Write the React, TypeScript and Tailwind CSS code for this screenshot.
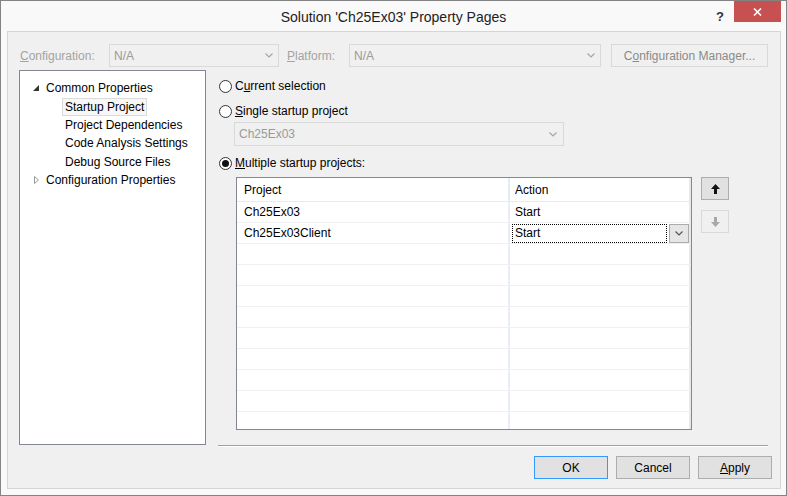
import React from 'react';

const FONT = { fontFamily: '"Liberation Sans", Arial, sans-serif' };

function Chevron({ color = '#a6a6a6' }: { color?: string }) {
  return (
    <svg width="8" height="5" viewBox="0 0 8 5">
      <path d="M0.5 0.5 L4 4 L7.5 0.5" fill="none" stroke={color} strokeWidth="1.2" />
    </svg>
  );
}

function Radio({ checked }: { checked?: boolean }) {
  return (
    <span className="w-[13px] h-[13px] rounded-full border border-[#333] bg-white flex items-center justify-center shrink-0">
      {checked && <span className="w-[7px] h-[7px] rounded-full bg-[#111]" />}
    </span>
  );
}

function Arrow({ up, color }: { up?: boolean; color: string }) {
  return (
    <svg width="9" height="10" viewBox="0 0 9 10" style={{ transform: up ? undefined : 'rotate(180deg)' }}>
      <path d="M4.5 0 L9 5 L6 5 L6 10 L3 10 L3 5 L0 5 Z" fill={color} />
    </svg>
  );
}

const ROWS = [
  { project: 'Ch25Ex03', action: 'Start' },
  { project: 'Ch25Ex03Client', action: 'Start', editing: true },
  ...Array.from({ length: 9 }, () => ({ project: '', action: '' })),
];

const TREE = [
  { label: 'Common Properties', level: 0, icon: 'open' },
  { label: 'Startup Project', level: 1, selected: true },
  { label: 'Project Dependencies', level: 1 },
  { label: 'Code Analysis Settings', level: 1 },
  { label: 'Debug Source Files', level: 1 },
  { label: 'Configuration Properties', level: 0, icon: 'closed' },
];

export default function App() {
  return (
    <div style={FONT} className="w-[787px] h-[496px] border border-[#838383] bg-[#f9f9f9] flex flex-col text-[12px] text-black overflow-hidden">
      {/* title bar */}
      <div className="h-[30px] relative flex justify-end items-start shrink-0">
        <div className="absolute inset-x-0 top-[6px] text-center text-[14px] text-[#222]">
          Solution 'Ch25Ex03' Property Pages
        </div>
        <div className="relative mt-[6px] mr-[10px] text-[13px] font-bold text-[#333]">?</div>
        <div className="relative w-[47px] h-[21px] bg-[#c75050] mr-[5px] flex items-center justify-center">
          <svg width="9" height="8" viewBox="0 0 9 8">
            <path d="M1 0.5 L8 7.5 M8 0.5 L1 7.5" stroke="#fff" strokeWidth="1.6" />
          </svg>
        </div>
      </div>

      {/* client */}
      <div className="ml-[6px] mr-[5px] h-[458px] border border-[#d5d5d5] bg-[#f0f0f0] flex flex-col">
        {/* configuration row */}
        <div className="flex items-center pt-[12px] pl-[12px] text-[#a3a3a3]">
          <span className="w-[89px]"><u>C</u>onfiguration:</span>
          <div className="w-[170px] h-[23px] border border-[#d9d9d9] flex items-center justify-between pl-[4px] pr-[5px] text-[#9a9a9a]">
            <span>N/A</span>
            <Chevron />
          </div>
          <span className="ml-[8px] w-[62px]"><u>P</u>latform:</span>
          <div className="w-[252px] h-[23px] border border-[#d9d9d9] flex items-center justify-between pl-[4px] pr-[5px] text-[#9a9a9a]">
            <span>N/A</span>
            <Chevron />
          </div>
          <div className="ml-[10px] w-[157px] h-[23px] border border-[#d9d9d9] flex items-center justify-center text-[#8a8a8a]">
            C<u>o</u>nfiguration Manager...
          </div>
        </div>

        {/* main */}
        <div className="flex mt-[3px]">
          <div className="ml-[11px] w-[187px] h-[375px] border border-[#828790] bg-white pt-[8px] shrink-0">
            {TREE.map((t) => (
              <div key={t.label} className="h-[18.4px] flex items-center">
                {t.level === 0 ? (
                  <>
                    <span className="w-[26px] flex justify-end pr-[7px]">
                      {t.icon === 'open' ? (
                        <svg width="6" height="6" viewBox="0 0 6 6">
                          <path d="M6 0 L6 6 L0 6 Z" fill="#333" />
                        </svg>
                      ) : (
                        <svg width="5" height="8" viewBox="0 0 5 8">
                          <path d="M0.5 0.5 L4.5 4 L0.5 7.5 Z" fill="none" stroke="#9a9a9a" />
                        </svg>
                      )}
                    </span>
                    <span>{t.label}</span>
                  </>
                ) : (
                  <span
                    className={
                      'ml-[42px] px-[2px] h-[18px] flex items-center border ' +
                      (t.selected ? 'border-[#dadada] bg-[#f7f7f7]' : 'border-transparent')
                    }
                  >
                    {t.label}
                  </span>
                )}
              </div>
            ))}
          </div>

          <div className="ml-[12px] w-[550px] flex flex-col">
            <div className="mt-[8px] h-[16px] flex items-center gap-[3px] pl-[1px]">
              <Radio />
              <span>C<u>u</u>rrent selection</span>
            </div>
            <div className="mt-[9px] h-[16px] flex items-center gap-[3px] pl-[1px]">
              <Radio />
              <span><u>S</u>ingle startup project</span>
            </div>
            <div className="mt-[3px] ml-[16px] w-[330px] h-[24px] border border-[#d9d9d9] flex items-center justify-between pl-[4px] pr-[6px] text-[#9a9a9a]">
              <span>Ch25Ex03</span>
              <Chevron />
            </div>
            <div className="mt-[9px] h-[16px] flex items-center gap-[3px] pl-[1px]">
              <Radio checked />
              <span><u>M</u>ultiple startup projects:</span>
            </div>

            <div className="mt-[6px] flex items-start">
              <div className="ml-[18px] w-[456px] h-[253px] border border-[#828790] bg-white flex flex-col overflow-hidden">
                <div className="h-[24px] flex border-b border-[#e5ebf3] shrink-0">
                  <div className="w-[271px] pl-[7px] flex items-center">Project</div>
                  <div className="w-[2px] bg-[#e5ebf3]" />
                  <div className="flex-1 pl-[5px] flex items-center">Action</div>
                  <div className="w-[2px] bg-[#e8e8e8]" />
                </div>
                {ROWS.map((r, i) => (
                  <div key={i} className="h-[21px] flex border-b border-[#f0f0f0] shrink-0">
                    <div className="w-[271px] pl-[7px] flex items-center">{r.project}</div>
                    <div className="w-[2px] bg-[#e9eef5]" />
                    <div className="flex-1 flex items-center">
                      {r.editing ? (
                        <div className="flex items-center ml-[2px]">
                          <div className="w-[155px] h-[19px] border border-dotted border-black flex items-center pl-[2px]">
                            {r.action}
                          </div>
                          <div className="ml-[2px] w-[20px] h-[19px] border border-[#acacac] bg-[#e6e6e6] flex items-center justify-center">
                            <Chevron color="#555" />
                          </div>
                        </div>
                      ) : (
                        <span className="pl-[5px]">{r.action}</span>
                      )}
                    </div>
                    <div className="w-[2px] bg-[#e8e8e8]" />
                  </div>
                ))}
              </div>
              <div className="ml-[9px] flex flex-col">
                <div className="w-[28px] h-[23px] border border-[#adadad] bg-[#e1e1e1] flex items-center justify-center">
                  <Arrow up color="#111" />
                </div>
                <div className="mt-[10px] w-[28px] h-[23px] border border-[#d9d9d9] bg-[#f0f0f0] flex items-center justify-center">
                  <Arrow color="#a8a8a8" />
                </div>
              </div>
            </div>

            <div className="mt-[15px] h-[2px] border-t border-[#a0a0a0] border-b border-b-white" />
          </div>
        </div>

        {/* buttons */}
        <div className="mt-[9px] flex justify-end gap-[8px] pr-[8px]">
          <div className="w-[74px] h-[23px] border border-[#3399ff] bg-[#e1e1e1] flex items-center justify-center">OK</div>
          <div className="w-[74px] h-[23px] border border-[#adadad] bg-[#e1e1e1] flex items-center justify-center">Cancel</div>
          <div className="w-[74px] h-[23px] border border-[#adadad] bg-[#e1e1e1] flex items-center justify-center"><u>A</u>pply</div>
        </div>
      </div>
    </div>
  );
}
